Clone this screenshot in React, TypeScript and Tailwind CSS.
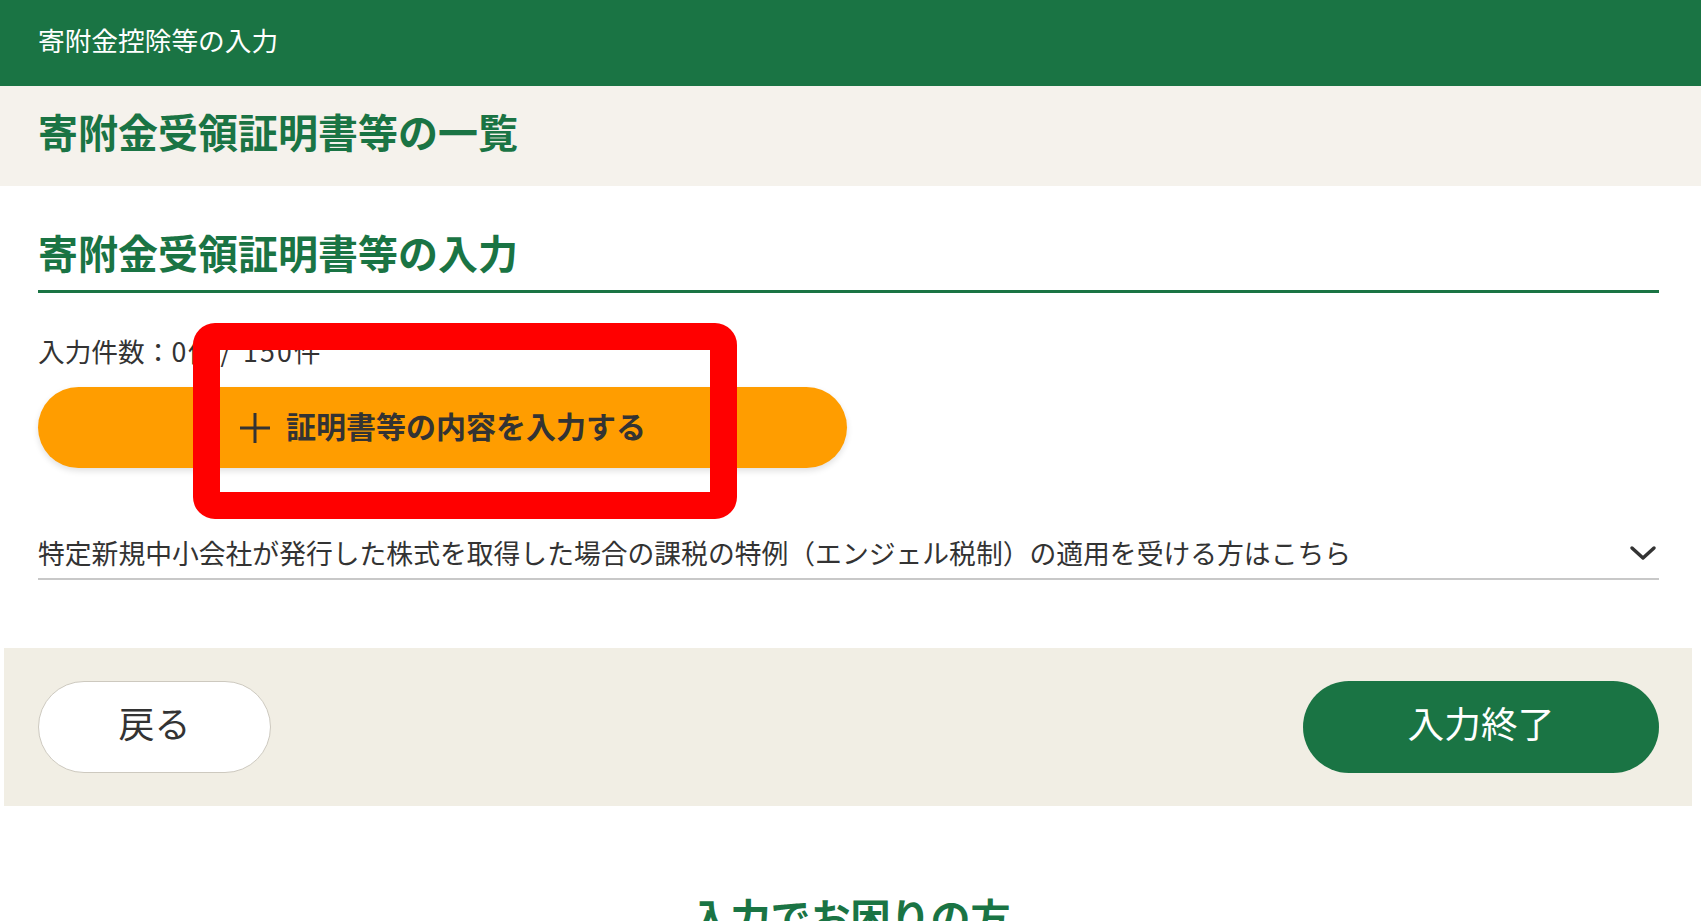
import React from "react";

function PlusIcon() {
  return (
    <svg width="32" height="32" viewBox="0 0 32 32" className="flex-shrink-0">
      <path d="M16 1v30M1 16h30" stroke="#333" strokeWidth="3" fill="none" />
    </svg>
  );
}

function Chevron() {
  return (
    <svg width="28" height="16" viewBox="0 0 28 16" className="flex-shrink-0">
      <path d="M3 3l11 10 11-10" stroke="#333" strokeWidth="3.5" fill="none" strokeLinecap="round" strokeLinejoin="round" />
    </svg>
  );
}

export default function App() {
  return (
    <div className="relative min-h-screen bg-white font-['Noto_Sans_CJK_JP','Noto_Sans',sans-serif] text-[#333] overflow-hidden">
      {/* ヘッダー */}
      <header className="h-[86px] bg-[#1a7444] px-[38px] flex items-center">
        <span className="pb-[6px] text-[26.7px] leading-none text-white">寄附金控除等の入力</span>
      </header>

      {/* ページタイトル */}
      <div className="h-[100px] bg-[#f5f2ec] px-[38px] flex items-center">
        <h1 className="pb-[10px] text-[40px] leading-none font-bold text-[#1a7444]">寄附金受領証明書等の一覧</h1>
      </div>

      {/* 入力エリア */}
      <main className="pl-[38px] pr-[42px]">
        <h2 className="mt-[38px] pb-[10px] border-b-[3px] border-[#1a7444] text-[40px] leading-[56px] font-bold text-[#1a7444]">
          寄附金受領証明書等の入力
        </h2>

        <p className="mt-[40px] text-[26.7px] leading-[36px]">
          入力件数：<span className="tracking-[0.06em]">0</span>件 /<span className="ml-[12px] tracking-[0.08em]">150</span>件
        </p>

        <button className="mt-[18px] w-[809px] h-[81px] rounded-full bg-[#ff9d00] shadow-[0_3px_6px_rgba(0,0,0,0.12)] flex items-center justify-center gap-[15px]">
          <PlusIcon />
          <span className="pb-[6px] text-[30px] leading-none font-bold text-[#333]">証明書等の内容を入力する</span>
        </button>

        <div className="mt-[67px] pb-[7px] border-b-2 border-[#c8c8c8] flex items-center justify-between">
          <span className="text-[26.8px] leading-[36px]">
            特定新規中小会社が発行した株式を取得した場合の課税の特例（エンジェル税制）の適用を受ける方はこちら
          </span>
          <span className="mr-[2px]">
            <Chevron />
          </span>
        </div>
      </main>

      {/* フッターボタン */}
      <div className="mt-[68px] ml-[4px] mr-[9px] bg-[#f1eee4] pl-[34px] pr-[33px] py-[33px] flex items-center justify-between">
        <button className="w-[233px] h-[92px] pb-[10px] rounded-full bg-white border border-[#cdc9bf] text-[36px] leading-none text-[#333]">
          戻る
        </button>
        <button className="w-[356px] h-[92px] pb-[10px] rounded-full bg-[#1a7444] text-[36.7px] leading-none text-white">
          入力終了
        </button>
      </div>

      <h2 className="mt-[82px] text-center text-[40px] leading-[56px] font-bold text-[#1a7444]">入力でお困りの方</h2>

      {/* 注釈の赤枠 */}
      <div className="absolute left-[193px] top-[323px] w-[544px] h-[196px] border-[27px] border-[#ff0000] rounded-[22px] pointer-events-none" />
    </div>
  );
}
